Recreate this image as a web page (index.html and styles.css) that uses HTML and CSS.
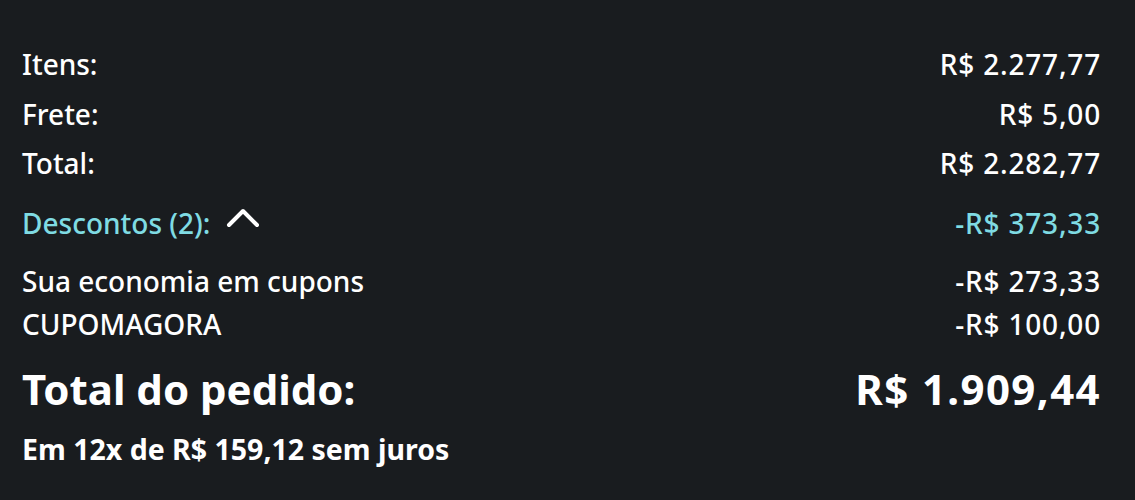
FILE: index.html
```html
<!DOCTYPE html>
<html lang="pt-BR">
<head>
    <meta charset="UTF-8">
    <meta name="viewport" content="width=device-width, initial-scale=1.0">
    <title>Resumo do pedido</title>
    <link rel="stylesheet" href="styles.css">
</head>
<body>
    <div id="summary">
        <div class="row">
            <span>Itens:</span>
            <span class="amount">R$ 2.277,77</span>
        </div>
        <div class="row">
            <span>Frete:</span>
            <span class="amount">R$ 5,00</span>
        </div>
        <div class="row">
            <span>Total:</span>
            <span class="amount">R$ 2.282,77</span>
        </div>
        <div class="row discount">
            <span class="toggle">Descontos (2):
                <svg class="chevron" width="34" height="22" viewBox="0 0 34 22">
                    <polyline points="3,18 17,4 31,18" fill="none" stroke="#fff" stroke-width="4" stroke-linecap="round" stroke-linejoin="round"/>
                </svg>
            </span>
            <span class="amount">-R$ 373,33</span>
        </div>
        <div class="row sub">
            <span>Sua economia em cupons</span>
            <span class="amount">-R$ 273,33</span>
        </div>
        <div class="row sub">
            <span>CUPOMAGORA</span>
            <span class="amount">-R$ 100,00</span>
        </div>
        <div class="row grand">
            <span>Total do pedido:</span>
            <span class="amount">R$ 1.909,44</span>
        </div>
        <div class="installments">Em 12x de R$ 159,12 sem juros</div>
    </div>
</body>
</html>
```

FILE: styles.css
```css
body {
    margin: 0;
    padding: 0;
    background-color: #191c1f;
    color: #ffffff;
    font-family: "Noto Sans", sans-serif;
}
#summary {
    padding: 40px 34px 0 22px;
}
.row {
    display: flex;
    justify-content: space-between;
    align-items: baseline;
    font-size: 28px;
    font-weight: 500;
    line-height: 49.5px;
}
.amount {
    letter-spacing: 0.8px;
}
.discount {
    color: #7fdbe3;
    line-height: 58px;
    margin-top: 5px;
}
.toggle {
    display: flex;
    align-items: center;
    gap: 16px;
}
.chevron {
    display: block;
    margin-bottom: 9px;
}
.sub {
    line-height: 43px;
}
.discount + .sub {
    margin-top: 8px;
}
.grand {
    font-size: 42px;
    font-weight: bold;
    line-height: 70px;
    margin-top: 8px;
}
.grand .amount {
    letter-spacing: 1.4px;
}
.installments {
    font-size: 28.5px;
    font-weight: bold;
    line-height: 50.5px;
}
```
